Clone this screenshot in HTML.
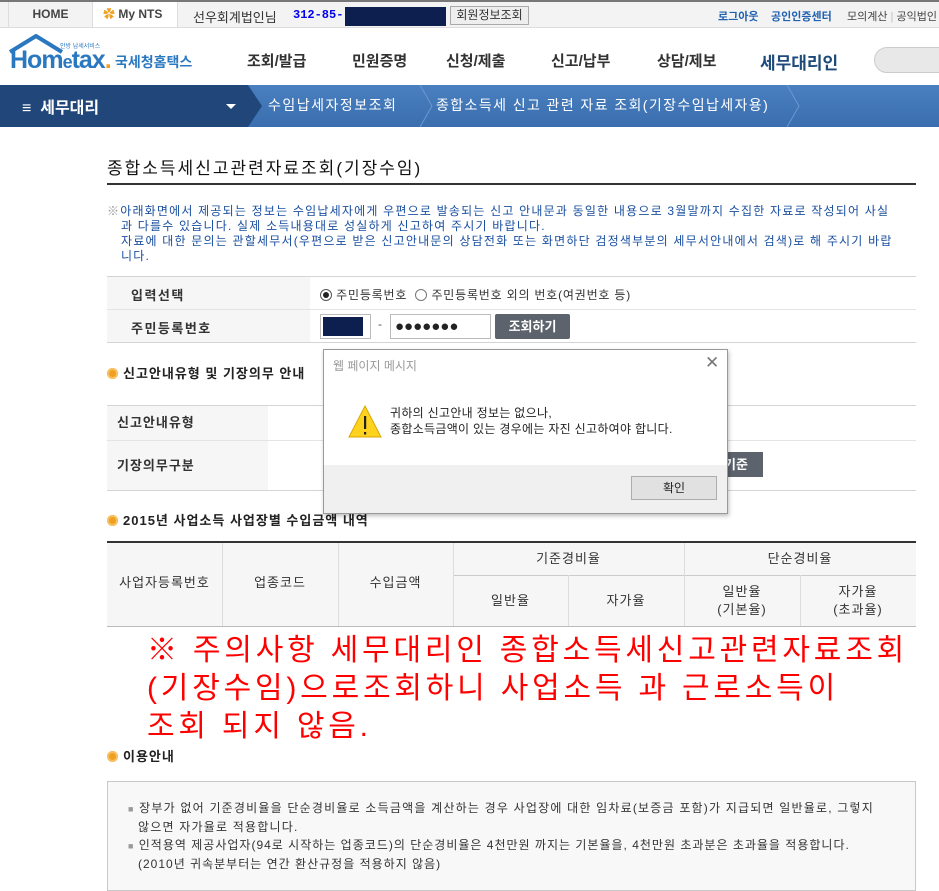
<!DOCTYPE html>
<html><head><meta charset="utf-8"><style>
*{margin:0;padding:0;box-sizing:border-box}
body{width:939px;height:877px;overflow:hidden;background:#fff;font-family:"Liberation Sans","Noto Sans CJK KR","NanumGothic",sans-serif;position:relative;color:#222}
.a{position:absolute;white-space:nowrap}
.sec{font-size:13px;font-weight:bold;color:#222;letter-spacing:1px}
.dot{display:inline-block;width:11px;height:11px;border-radius:50%;background:#f0a020;vertical-align:-1px;margin-right:5px;box-shadow:inset 0 0 0 2px #f7c060}
.line{position:absolute;height:1px;background:#d4d4d4}
.vl{position:absolute;width:1px;background:#dcdcdc}
.th{position:absolute;font-size:13px;color:#333;text-align:center;line-height:18px;letter-spacing:1px}
</style></head><body>
<!-- top bar -->
<div class="a" style="left:0;top:0;width:939px;height:28px;background:#f3f3f3;border-top:2px solid #777;border-bottom:1px solid #ddd"></div>
<div class="a" style="left:8px;top:2px;width:85px;height:25px;border-left:1px solid #ddd;border-right:1px solid #ddd;font-size:12px;font-weight:bold;color:#444;text-align:center;line-height:25px">HOME</div>
<div class="a" style="left:93px;top:2px;width:85px;height:25px;background:#fff;border-right:1px solid #ddd;font-size:12px;font-weight:bold;color:#444;line-height:25px;padding-left:10px"><span style="color:#f0a020">✿</span> My NTS</div>
<div class="a" style="left:193px;top:7px;font-size:13px;color:#333">선우회계법인님</div>
<div class="a" style="left:293px;top:8px;font-size:12px;color:#0000ee;font-weight:bold;font-family:'Liberation Mono',monospace">312-85-</div>
<div class="a" style="left:345px;top:7px;width:101px;height:19px;background:#0d1f4f"></div>
<div class="a" style="left:450px;top:6px;width:79px;height:19px;border:1px solid #aaa;background:#eee;font-size:12px;color:#333;text-align:center;line-height:17px">회원정보조회</div>
<div class="a" style="left:718px;top:8px;font-size:11px;color:#2060b0;font-weight:bold">로그아웃</div>
<div class="a" style="left:771px;top:8px;font-size:11px;color:#2060b0;font-weight:bold">공인인증센터</div>
<div class="a" style="left:847px;top:8px;font-size:11px;color:#444">모의계산 <span style="color:#bbb">|</span> 공익법인</div>
<!-- header -->
<svg class="a" style="left:8px;top:34px" width="60" height="20" viewBox="0 0 60 20"><path d="M2 18 L28 2 L54 18" fill="none" stroke="#2a78c0" stroke-width="4"/></svg>
<div class="a" style="left:10px;top:46px;font-size:25px;font-weight:bold;color:#2a78c0;letter-spacing:-1px">Hom<span style="font-size:18px">e</span>tax<span style="color:#f0a020">.</span></div>
<div class="a" style="left:60px;top:41px;font-size:6px;color:#2a78c0">안방 납세서비스</div>
<div class="a" style="left:115px;top:52px;font-size:14px;font-weight:bold;color:#2a78c0">국세청홈택스</div>
<div class="a" style="left:247px;top:50px;font-size:15px;font-weight:bold;color:#333">조회/발급</div>
<div class="a" style="left:352px;top:50px;font-size:15px;font-weight:bold;color:#333">민원증명</div>
<div class="a" style="left:446px;top:50px;font-size:15px;font-weight:bold;color:#333">신청/제출</div>
<div class="a" style="left:551px;top:50px;font-size:15px;font-weight:bold;color:#333">신고/납부</div>
<div class="a" style="left:657px;top:50px;font-size:15px;font-weight:bold;color:#333">상담/제보</div>
<div class="a" style="left:760px;top:49px;font-size:17px;font-weight:bold;color:#1e4a7a">세무대리인</div>
<div class="a" style="left:874px;top:47px;width:80px;height:26px;border-radius:13px;background:#e8e8e8;border:1px solid #ccc"></div>
<!-- blue bar -->
<div class="a" style="left:0;top:85px;width:939px;height:42px;background:linear-gradient(#4a80c0,#3a6eae)"></div>
<svg class="a" style="left:0;top:85px" width="939" height="42"><polygon points="0,0 248,0 262,21 248,42 0,42" fill="#21477a"/><polyline points="420,0 432,21 420,42" fill="none" stroke="#6a98d0"/><polyline points="787,0 799,21 787,42" fill="none" stroke="#6a98d0"/><polygon points="226,19 236,19 231,24" fill="#fff"/></svg>
<div class="a" style="left:22px;top:94px;font-size:16px;color:#fff;font-weight:bold">≡ &nbsp;세무대리</div>
<div class="a" style="left:268px;top:95px;font-size:14px;color:#fff;letter-spacing:1.5px">수임납세자정보조회</div>
<div class="a" style="left:436px;top:95px;font-size:14px;color:#fff;letter-spacing:1.4px">종합소득세 신고 관련 자료 조회(기장수임납세자용)</div>
<!-- title -->
<div class="a" style="left:107px;top:154px;font-size:17px;color:#111;letter-spacing:2px">종합소득세신고관련자료조회(기장수임)</div>
<div class="a" style="left:107px;top:183px;width:809px;height:2px;background:#333"></div>
<div class="a" style="left:107px;top:204px;width:815px;font-size:12px;line-height:15px;color:#1a4fa0;white-space:normal;padding-left:14px;text-indent:-14px;letter-spacing:1.2px"><span style="color:#999">※</span>아래화면에서 제공되는 정보는 수임납세자에게 우편으로 발송되는 신고 안내문과 동일한 내용으로 3월말까지 수집한 자료로 작성되어 사실<br>과 다를수 있습니다. 실제 소득내용대로 성실하게 신고하여 주시기 바랍니다.<br>자료에 대한 문의는 관할세무서(우편으로 받은 신고안내문의 상담전화 또는 화면하단 검정색부분의 세무서안내에서 검색)로 해 주시기 바랍<br>니다.</div>
<!-- form table -->
<div class="a" style="left:107px;top:276px;width:203px;height:66px;background:#f6f6f6"></div>
<div class="line" style="left:107px;top:276px;width:809px"></div>
<div class="line" style="left:107px;top:309px;width:809px;background:#e4e4e4"></div>
<div class="line" style="left:107px;top:342px;width:809px"></div>
<div class="a" style="left:131px;top:285px;font-size:13px;font-weight:bold;color:#333;letter-spacing:1.5px">입력선택</div>
<div class="a" style="left:131px;top:318px;font-size:13px;font-weight:bold;color:#333;letter-spacing:1.5px">주민등록번호</div>
<div class="a" style="left:320px;top:286px;font-size:12px;color:#333;letter-spacing:0.8px"><span style="display:inline-block;width:12px;height:12px;border:1px solid #555;border-radius:50%;vertical-align:-2px;position:relative"><span style="position:absolute;left:2px;top:2px;width:6px;height:6px;border-radius:50%;background:#222"></span></span> 주민등록번호 <span style="display:inline-block;width:12px;height:12px;border:1px solid #777;border-radius:50%;vertical-align:-2px;margin-left:4px"></span> 주민등록번호 외의 번호(여권번호 등)</div>
<div class="a" style="left:320px;top:314px;width:51px;height:25px;border:1px solid #bbb;padding:2px"><div style="width:40px;height:19px;background:#0d1f4f"></div></div>
<div class="a" style="left:378px;top:317px;font-size:12px;color:#555">-</div>
<div class="a" style="left:390px;top:314px;width:101px;height:25px;border:1px solid #bbb;font-size:15px;line-height:23px;padding-left:4px;letter-spacing:0px">●●●●●●●</div>
<div class="a" style="left:495px;top:314px;width:75px;height:25px;background:#5c636d;color:#fff;font-size:13px;font-weight:bold;text-align:center;line-height:25px;border-radius:2px">조회하기</div>
<!-- section 2 -->
<div class="a sec" style="left:107px;top:363px"><span class="dot"></span>신고안내유형 및 기장의무 안내</div>
<div class="a" style="left:107px;top:405px;width:161px;height:85px;background:#f6f6f6"></div>
<div class="line" style="left:107px;top:405px;width:809px"></div>
<div class="line" style="left:107px;top:440px;width:809px;background:#e4e4e4"></div>
<div class="line" style="left:107px;top:490px;width:809px"></div>
<div class="a" style="left:117px;top:412px;font-size:13px;font-weight:bold;color:#333;letter-spacing:1px">신고안내유형</div>
<div class="a" style="left:117px;top:455px;font-size:13px;font-weight:bold;color:#333;letter-spacing:1px">기장의무구분</div>
<div class="a" style="left:700px;top:452px;width:63px;height:25px;background:#5c636d;color:#fff;font-size:13px;font-weight:bold;line-height:25px;padding-left:24px">기준</div>
<!-- section 3 -->
<div class="a sec" style="left:107px;top:510px"><span class="dot"></span>2015년 사업소득 사업장별 수입금액 내역</div>
<div class="a" style="left:107px;top:541px;width:809px;height:85px;background:#f6f6f6"></div>
<div class="a" style="left:107px;top:541px;width:809px;height:2px;background:#333"></div>
<div class="line" style="left:453px;top:575px;width:463px;background:#ccc"></div>
<div class="line" style="left:107px;top:626px;width:809px;background:#bbb"></div>
<div class="vl" style="left:222px;top:543px;height:83px"></div>
<div class="vl" style="left:338px;top:543px;height:83px"></div>
<div class="vl" style="left:453px;top:543px;height:83px"></div>
<div class="vl" style="left:568px;top:575px;height:51px"></div>
<div class="vl" style="left:684px;top:543px;height:83px"></div>
<div class="vl" style="left:800px;top:575px;height:51px"></div>
<div class="th" style="left:107px;top:574px;width:115px">사업자등록번호</div>
<div class="th" style="left:222px;top:574px;width:116px">업종코드</div>
<div class="th" style="left:338px;top:574px;width:115px">수입금액</div>
<div class="th" style="left:453px;top:550px;width:231px">기준경비율</div>
<div class="th" style="left:684px;top:550px;width:232px">단순경비율</div>
<div class="th" style="left:453px;top:592px;width:115px">일반율</div>
<div class="th" style="left:568px;top:592px;width:116px">자가율</div>
<div class="th" style="left:684px;top:583px;width:116px">일반율<br>(기본율)</div>
<div class="th" style="left:800px;top:583px;width:116px">자가율<br>(초과율)</div>
<!-- red note -->
<div class="a" style="left:147px;top:632px;font-size:30px;line-height:38px;color:#ff0000;letter-spacing:3.8px">※ 주의사항 세무대리인 종합소득세신고관련자료조회<br>(기장수임)으로조회하니 사업소득 과 근로소득이<br>조회 되지 않음.</div>
<!-- section 4 -->
<div class="a sec" style="left:107px;top:746px"><span class="dot"></span>이용안내</div>
<div class="a" style="left:107px;top:781px;width:809px;height:110px;border:1px solid #c8c8c8;background:#f8f8f8"></div>
<div class="a" style="left:128px;top:799px;width:780px;font-size:12px;line-height:18px;color:#333;white-space:normal;padding-left:10px;text-indent:-10px;letter-spacing:1.2px"><span style="color:#999;font-size:9px">■</span> 장부가 없어 기준경비율을 단순경비율로 소득금액을 계산하는 경우 사업장에 대한 임차료(보증금 포함)가 지급되면 일반율로, 그렇지<br>않으면 자가율로 적용합니다.</div>
<div class="a" style="left:128px;top:836px;width:780px;font-size:12px;line-height:18px;color:#333;white-space:normal;padding-left:10px;text-indent:-10px;letter-spacing:1px"><span style="color:#999;font-size:9px">■</span> 인적용역 제공사업자(94로 시작하는 업종코드)의 단순경비율은 4천만원 까지는 기본율을, 4천만원 초과분은 초과율을 적용합니다.<br>(2010년 귀속분부터는 연간 환산규정을 적용하지 않음)</div>
<!-- dialog -->
<div class="a" style="left:323px;top:349px;width:405px;height:165px;border:1px solid #999;background:#fff;box-shadow:1px 2px 4px rgba(0,0,0,.25)"></div>
<div class="a" style="left:324px;top:465px;width:403px;height:48px;background:#f0f0f0"></div>
<div class="a" style="left:333px;top:357px;font-size:12px;color:#999">웹 페이지 메시지</div>
<div class="a" style="left:705px;top:353px;font-size:17px;color:#777">✕</div>
<svg class="a" style="left:348px;top:405px" width="34" height="33"><polygon points="17,1 33,32 1,32" fill="#ffd21f" stroke="#d8a800"/><rect x="16" y="11" width="2.2" height="13" fill="#222"/><rect x="16" y="27" width="2.2" height="2.5" fill="#222"/></svg>
<div class="a" style="left:390px;top:405px;font-size:12px;line-height:16px;color:#222;letter-spacing:0.3px">귀하의 신고안내 정보는 없으나,<br>종합소득금액이 있는 경우에는 자진 신고하여야 합니다.</div>
<div class="a" style="left:631px;top:476px;width:86px;height:24px;border:1px solid #adadad;background:#e1e1e1;font-size:12px;text-align:center;line-height:22px;color:#222">확인</div>
</body></html>
